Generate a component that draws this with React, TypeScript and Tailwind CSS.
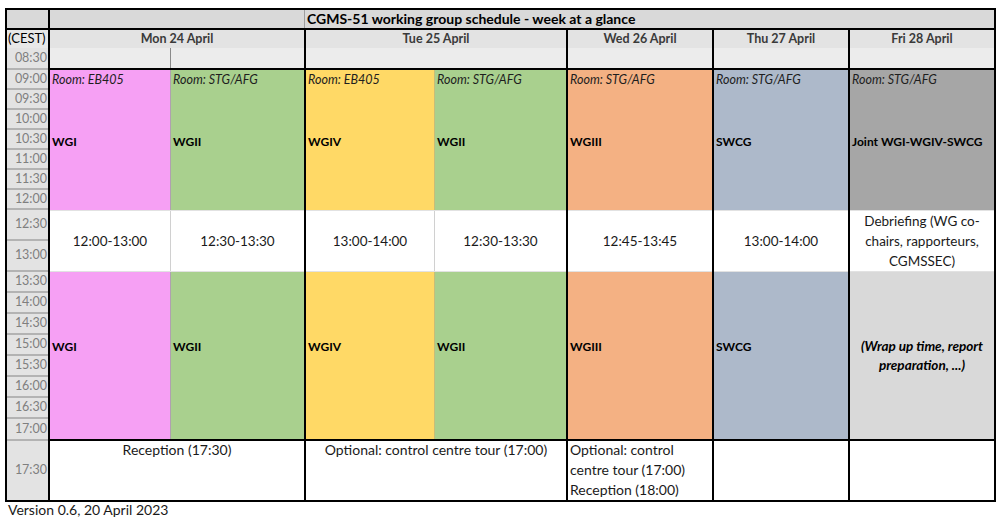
const morningTimes = ["09:00", "09:30", "10:00", "10:30", "11:00", "11:30", "12:00"];
const afternoonTimes = ["13:30", "14:00", "14:30", "15:00", "15:30", "16:00", "16:30", "17:00"];

function TimeCell({ t, h }: { t: string; h: string }) {
  return (
    <div
      className={`${h} flex items-center justify-end border-b-2 border-[#b3b3b3] bg-[#e3e3e3] pr-[1px] text-[12.5px] text-[#7f7f7f]`}
    >
      {t}
    </div>
  );
}

function Session({ room, label, color, className = "" }: { room: string; label: string; color: string; className?: string }) {
  return (
    <div className={`${color} ${className} flex h-full flex-col pl-[2px]`}>
      <div className="h-[20px] text-[12.5px] italic leading-[20px] text-[#1e1e1e]">{room}</div>
      <div className="mt-[42px] h-[20px] text-[12px] font-bold leading-[20px]">{label}</div>
    </div>
  );
}

function Afternoon({ label, color, className = "" }: { label: string; color: string; className?: string }) {
  return (
    <div className={`${color} ${className} flex h-full flex-col pl-[2px]`}>
      <div className="mt-[64px] h-[21px] text-[12px] font-bold leading-[21px]">{label}</div>
    </div>
  );
}

function Lunch({ time, className = "" }: { time: string; className?: string }) {
  return (
    <div className={`${className} flex h-full items-center justify-center bg-white text-[13.5px] text-[#1a1a1a]`}>{time}</div>
  );
}

function DayHeader({ title, split }: { title: string; split?: boolean }) {
  return (
    <>
      <div className="flex h-[18px] items-center justify-center bg-[#e3e3e3] text-[12.5px] font-bold text-[#3a3a3a]">{title}</div>
      <div className="flex h-[22px] border-b-2 border-black bg-[#ececec]">
        {split && <div className="w-[121px] border-r border-[#8a8a8a]" />}
      </div>
    </>
  );
}

export default function App() {
  return (
    <div className="h-[522px] w-[1000px] bg-white pl-[5px] pt-[8px] font-['Lato','Liberation_Sans',sans-serif] text-black">
      <div className="w-[991px] border-2 border-black">
        {/* title row */}
        <div className="flex h-[20px] border-b-2 border-black bg-[#d9d9d9]">
          <div className="w-[43px] border-r-2 border-black" />
          <div className="w-[255px] border-r border-[#9e9e9e]" />
          <div className="flex-1 pl-[2px] text-[14px] font-bold leading-[18px]">
            CGMS-51 working group schedule - week at a glance
          </div>
        </div>

        <div className="flex">
          {/* time column */}
          <div className="flex w-[43px] flex-col border-r-2 border-black">
            <div className="flex h-[18px] items-center bg-[#e8e8e8] pl-[1px] text-[13px]">(CEST)</div>
            <TimeCell t="08:30" h="h-[22px]" />
            {morningTimes.map((t) => (
              <TimeCell key={t} t={t} h="h-[20px]" />
            ))}
            <TimeCell t="12:30" h="h-[31px]" />
            <TimeCell t="13:00" h="h-[31px]" />
            {afternoonTimes.map((t, i) => (
              <TimeCell key={t} t={t} h={i === 7 ? "h-[22px]" : "h-[21px]"} />
            ))}
            <div className="flex h-[59px] items-center justify-end bg-[#e3e3e3] pr-[1px] text-[12.5px] text-[#7f7f7f]">17:30</div>
          </div>

          {/* Mon */}
          <div className="flex w-[256px] flex-col border-r-2 border-black">
            <DayHeader title="Mon 24 April" split />
            <div className="flex h-[140px]">
              <Session room="Room: EB405" label="WGI" color="bg-[#f6a0f4]" className="w-[121px] border-r border-[#b0a0b0]" />
              <Session room="Room: STG/AFG" label="WGII" color="bg-[#a9d08e]" className="flex-1" />
            </div>
            <div className="flex h-[62px] border-y border-[#e2e2e2]">
              <Lunch time="12:00-13:00" className="w-[121px] border-r border-[#d0d0d0]" />
              <Lunch time="12:30-13:30" className="flex-1" />
            </div>
            <div className="flex h-[169px] border-b-2 border-black">
              <Afternoon label="WGI" color="bg-[#f6a0f4]" className="w-[121px] border-r border-[#b0a0b0]" />
              <Afternoon label="WGII" color="bg-[#a9d08e]" className="flex-1" />
            </div>
            <div className="h-[59px] text-center text-[14px] leading-[18px] text-[#1a1a1a]">Reception (17:30)</div>
          </div>

          {/* Tue */}
          <div className="flex w-[262px] flex-col border-r-2 border-black">
            <DayHeader title="Tue 25 April" />
            <div className="flex h-[140px]">
              <Session room="Room: EB405" label="WGIV" color="bg-[#ffd966]" className="w-[129px] border-r border-[#c8bd78]" />
              <Session room="Room: STG/AFG" label="WGII" color="bg-[#a9d08e]" className="flex-1" />
            </div>
            <div className="flex h-[62px] border-y border-[#e2e2e2]">
              <Lunch time="13:00-14:00" className="w-[129px] border-r border-[#d0d0d0]" />
              <Lunch time="12:30-13:30" className="flex-1" />
            </div>
            <div className="flex h-[169px] border-b-2 border-black">
              <Afternoon label="WGIV" color="bg-[#ffd966]" className="w-[129px] border-r border-[#c8bd78]" />
              <Afternoon label="WGII" color="bg-[#a9d08e]" className="flex-1" />
            </div>
            <div className="h-[59px] text-center text-[14px] leading-[18px] text-[#1a1a1a]">
              Optional: control centre tour (17:00)
            </div>
          </div>

          {/* Wed */}
          <div className="flex w-[146px] flex-col border-r-2 border-black">
            <DayHeader title="Wed 26 April" />
            <div className="flex h-[140px]">
              <Session room="Room: STG/AFG" label="WGIII" color="bg-[#f4b183]" className="flex-1" />
            </div>
            <div className="flex h-[62px] border-y border-[#e2e2e2]">
              <Lunch time="12:45-13:45" className="flex-1" />
            </div>
            <div className="flex h-[169px] border-b-2 border-black">
              <Afternoon label="WGIII" color="bg-[#f4b183]" className="flex-1" />
            </div>
            <div className="flex h-[59px] flex-col pl-[2px] text-[14px] leading-[20px] text-[#1a1a1a]">
              <div className="-mt-[1px]">
                Optional: control
                <br />
                centre tour (17:00)
                <br />
                Reception (18:00)
              </div>
            </div>
          </div>

          {/* Thu */}
          <div className="flex w-[136px] flex-col border-r-2 border-black">
            <DayHeader title="Thu 27 April" />
            <div className="flex h-[140px]">
              <Session room="Room: STG/AFG" label="SWCG" color="bg-[#adb9ca]" className="flex-1" />
            </div>
            <div className="flex h-[62px] border-y border-[#e2e2e2]">
              <Lunch time="13:00-14:00" className="flex-1" />
            </div>
            <div className="flex h-[169px] border-b-2 border-black">
              <Afternoon label="SWCG" color="bg-[#adb9ca]" className="flex-1" />
            </div>
            <div className="h-[59px]" />
          </div>

          {/* Fri */}
          <div className="flex w-[144px] flex-col">
            <DayHeader title="Fri 28 April" />
            <div className="flex h-[140px]">
              <Session room="Room: STG/AFG" label="Joint WGI-WGIV-SWCG" color="bg-[#a6a6a6]" className="flex-1" />
            </div>
            <div className="flex h-[62px] items-center justify-center border-y border-[#e2e2e2] bg-white text-center text-[13.5px] leading-[20px] text-[#1a1a1a]">
              <div>
                Debriefing (WG co-
                <br />
                chairs, rapporteurs,
                <br />
                CGMSSEC)
              </div>
            </div>
            <div className="flex h-[169px] flex-col border-b-2 border-black bg-[#d9d9d9]">
              <div className="mt-[65px] text-center text-[13.5px] font-bold italic leading-[19px]">
                (Wrap up time, report
                <br />
                preparation, ...)
              </div>
            </div>
            <div className="h-[59px]" />
          </div>
        </div>
      </div>
      <div className="pl-[3px] text-[14px] leading-[16px] text-[#1a1a1a]">Version 0.6, 20 April 2023</div>
    </div>
  );
}
